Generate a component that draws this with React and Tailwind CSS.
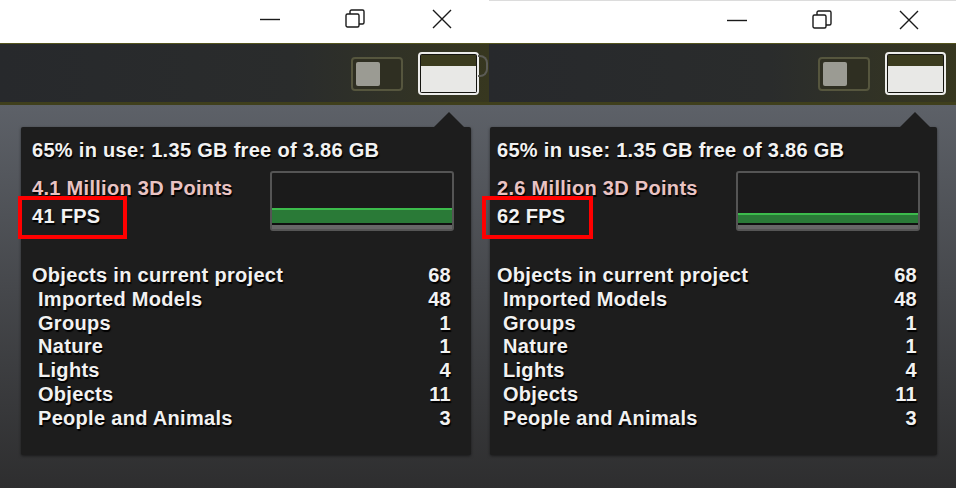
const font = { fontFamily: '"Liberation Sans", Arial, sans-serif' };

const stats = [
  { label: "Imported Models", value: 48 },
  { label: "Groups", value: 1 },
  { label: "Nature", value: 1 },
  { label: "Lights", value: 4 },
  { label: "Objects", value: 11 },
  { label: "People and Animals", value: 3 },
];

function TitleBar({ edge }) {
  return (
    <div className={`h-[43px] bg-white flex items-start justify-end pt-[9px] pr-[37px] ${edge ? "border-t border-[#dcdcdc]" : ""}`}>
      <svg width="20" height="20" viewBox="0 0 20 20" className="mr-[65px]">
        <path d="M0 10.5h20" stroke="#1a1a1a" strokeWidth="1.4" />
      </svg>
      <svg width="20" height="20" viewBox="0 0 20 20" className="mr-[67px]">
        <rect x="1" y="5" width="13" height="13" fill="none" stroke="#1a1a1a" strokeWidth="1.4" rx="1.5" />
        <path d="M5 5V2.5C5 1.7 5.7 1 6.5 1H17.5C18.3 1 19 1.7 19 2.5V13.5C19 14.3 18.3 15 17.5 15H14" fill="none" stroke="#1a1a1a" strokeWidth="1.4" />
      </svg>
      <svg width="20" height="20" viewBox="0 0 20 20">
        <path d="M1 1L19 19M19 1L1 19" stroke="#1a1a1a" strokeWidth="1.4" />
      </svg>
    </div>
  );
}

function Toolbar({ ghost }) {
  return (
    <div className="h-[62px] border-t border-b-[3px] border-t-[#55551f] border-b-[#3f3f1c] bg-gradient-to-r from-[#27292c] via-[#2a2c2c] via-60% to-[#37371f] flex items-center justify-end pr-[10px] pt-[1px]">
      <div className="w-[52px] h-[34px] rounded-[4px] border-2 border-[#56563e] bg-[#2f2f22] p-[3px] mr-[15px]">
        <div className="w-[24px] h-full rounded-[2px] bg-[#9b9b93]" />
      </div>
      <div className="relative">
        <div className="w-[61px] h-[43px] rounded-[4px] border-2 border-[#ececea] bg-[#151510] p-px flex flex-col">
          <div className="h-[11px] bg-[#3b3b1e]" />
          <div className="flex-1 bg-[#e8e8e6]" />
        </div>
        {ghost && (
          <div className="absolute left-[60px] top-[3px] w-[10px] h-[22px] rounded-r-[8px] border-2 border-l-0 border-[#5b5b55]" />
        )}
      </div>
    </div>
  );
}

function Panel({ points, fps, fill, pad, boxLeft, boxWidth }) {
  return (
    <div className="relative h-[328px] bg-[#1d1d1d] rounded-[2px] shadow-[0_1px_3px_rgba(0,0,0,0.5)] text-[#f2f2f2] font-bold text-[20px] tracking-[0.3px] [text-shadow:1px_2px_1px_#000]" style={font}>
      <div className="absolute -top-[15px] right-[7px] w-0 h-0 border-l-[15px] border-r-[15px] border-b-[15px] border-l-transparent border-r-transparent border-b-[#1d1d1d]" />
      <div className="pt-[11px] leading-[24px]" style={{ paddingLeft: pad }}>65% in use: 1.35 GB free of 3.86 GB</div>
      <div className="flex justify-between">
        <div className="pt-[12px] leading-[28px]" style={{ paddingLeft: pad }}>
          <div className="text-[#e9c3c3]">{points} Million 3D Points</div>
          <div>{fps} FPS</div>
        </div>
        <div className="mt-[9px] mr-[17px] w-[184px] h-[60px] rounded-[3px] border-2 border-[#555555] bg-[#1b1b1b] flex flex-col justify-end">
          <div className="bg-[#2a7a37] border-t-2 border-[#3cbc4c]" style={{ height: fill }} />
          <div className="h-[2px] bg-[#101010]" />
          <div className="h-[4px] bg-[#676767]" />
        </div>
      </div>
      <div className="mt-[33px] pr-[20px] leading-[23.8px]" style={{ paddingLeft: pad }}>
        <div className="flex justify-between">
          <span>Objects in current project</span>
          <span>68</span>
        </div>
        {stats.map((s) => (
          <div key={s.label} className="flex justify-between pl-[6px]">
            <span>{s.label}</span>
            <span>{s.value}</span>
          </div>
        ))}
      </div>
      <div className="absolute top-[69px] h-[43px] border-4 border-[#ff0000]" style={{ left: boxLeft, width: boxWidth }} />
    </div>
  );
}

export default function App() {
  return (
    <div className="w-[956px] h-[488px] flex overflow-hidden bg-[#2d2d2d]">
      <div className="w-[489px] flex flex-col">
        <TitleBar />
        <Toolbar ghost />
        <div className="flex-1 bg-gradient-to-b from-[#5d6168] to-[#2e2e2f] pt-[22px] pl-[21px] pr-[18px]">
          <Panel points="4.1" fps="41" fill={15} pad={11} boxLeft={-3} boxWidth={109} />
        </div>
      </div>
      <div className="w-[467px] flex flex-col">
        <TitleBar edge />
        <Toolbar />
        <div className="flex-1 bg-gradient-to-b from-[#5d6168] to-[#2e2e2f] pt-[22px] pl-[1px] pr-[19px]">
          <Panel points="2.6" fps="62" fill={10} pad={7} boxLeft={-8} boxWidth={111} />
        </div>
      </div>
    </div>
  );
}
